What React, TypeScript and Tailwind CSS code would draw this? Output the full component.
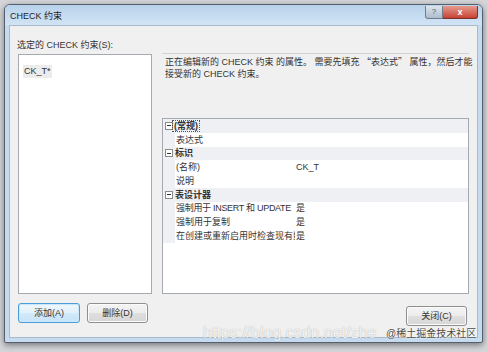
import { Fragment } from 'react';

type Row = { kind: 'cat' | 'prop'; label: string; value?: string; focus?: boolean; tight?: boolean };

const rows: Row[] = [
  { kind: 'cat', label: '(常规)', focus: true },
  { kind: 'prop', label: '表达式', value: '' },
  { kind: 'cat', label: '标识' },
  { kind: 'prop', label: '(名称)', value: 'CK_T' },
  { kind: 'prop', label: '说明', value: '' },
  { kind: 'cat', label: '表设计器' },
  { kind: 'prop', label: '强制用于 INSERT 和 UPDATE', value: '是', tight: true },
  { kind: 'prop', label: '强制用于复制', value: '是' },
  { kind: 'prop', label: '在创建或重新启用时检查现有数据', value: '是' },
];

function MinusBox() {
  return (
    <div className="w-[8px] h-[8px] border border-[#8a8a8a] bg-white flex items-center justify-center">
      <div className="w-[4px] h-px bg-[#333]" />
    </div>
  );
}

function WinButton({ label, primary, className = '' }: { label: string; primary?: boolean; className?: string }) {
  return (
    <button
      type="button"
      className={
        primary
          ? `h-[20px] rounded-[3px] border border-[#4a9dd6] bg-[linear-gradient(#eef7fd,#e3f1fb_50%,#d3eafa_50%,#c6e3f8)] shadow-[inset_0_0_0_1px_#c9e6fb] text-[9px] leading-[12px] text-[#333] ${className}`
          : `h-[20px] rounded-[3px] border border-[#8e8f8f] bg-[linear-gradient(#f4f4f4,#ececec_50%,#dfdfdf_50%,#d6d6d6)] shadow-[inset_0_0_0_1px_#fbfbfb] text-[9px] leading-[12px] text-[#333] ${className}`
      }
    >
      {label}
    </button>
  );
}

export default function App() {
  return (
    <div className="relative w-[487px] h-[352px] overflow-hidden bg-[#d3d5d8] pt-[4px] pl-[4px] font-['Liberation_Sans','Noto_Sans_CJK_SC',sans-serif] text-[#333]">
      {/* 对话框窗口 */}
      <div className="w-[479px] h-[339px] flex flex-col rounded-t-[6px] rounded-b-[2px] border border-[#55606c] bg-[#c6dbf0] shadow-[0_2px_6px_rgba(0,0,0,0.45)]">
        {/* 标题栏 */}
        <div className="h-[20px] flex items-start rounded-t-[5px] bg-gradient-to-b from-[#b8d2ec] to-[#d2e4f5]">
          <span className="ml-[5px] mt-[5px] text-[9px] leading-[12px] text-[#1e1e1e]">CHECK 约束</span>
          <div className="ml-auto mr-[4px] mt-[1px] flex">
            <div className="w-[18px] h-[13px] rounded-bl-[3px] border border-[#6d7d8f] border-t-0 bg-gradient-to-b from-[#dde4ec] to-[#aebccb] flex items-center justify-center text-[8px] leading-[10px] text-[#4c5866]">
              ?
            </div>
            <div className="w-[35px] h-[13px] rounded-br-[3px] border border-[#7e2f28] border-t-0 border-l-0 bg-gradient-to-b from-[#e59a8c] to-[#c63f33] flex items-center justify-center text-[9px] leading-[10px] font-bold text-white">
              x
            </div>
          </div>
        </div>

        {/* 客户区 */}
        <div className="ml-[4px] mr-[4px] h-[313px] border border-[#a7b9cc] bg-[#f0f0f0] flex">
          {/* 左侧：约束列表 */}
          <div className="ml-[8px] w-[134px] flex flex-col">
            <div className="mt-[13px] -ml-px h-[12px] text-[9px] leading-[12px] whitespace-nowrap">选定的 CHECK 约束(S):</div>
            <div className="mt-[3px] h-[240px] border border-[#a5a9b0] bg-white pl-[4px] pt-[2px]">
              <span className="inline-block px-[1px] bg-[#ececec] text-[9px] leading-[13px]">CK_T*</span>
            </div>
            <div className="mt-[9px] flex gap-[7px]">
              <WinButton label="添加(A)" primary className="w-[62px]" />
              <WinButton label="删除(D)" className="w-[61px]" />
            </div>
          </div>

          {/* 右侧：属性 */}
          <div className="ml-[10px] w-[307px] flex flex-col">
            <div className="mt-[27px] h-[65px] border-t border-[#d2d2d2] pl-[3px] pt-[2px] text-[9px] leading-[12px]">
              <div className="whitespace-nowrap">
                正在编辑新的 CHECK 约束 的属性。 需要先填充 <span className="font-['Noto_Sans_CJK_SC',sans-serif]">“</span>表达式<span className="font-['Noto_Sans_CJK_SC',sans-serif]">”</span> 属性，然后才能
              </div>
              <div className="whitespace-nowrap">接受新的 CHECK 约束。</div>
            </div>
            <div className="h-[176px] border border-[#a5a9b0] bg-white">
              {rows.map((r, i) => (
                <Fragment key={i}>
                  {r.kind === 'cat' ? (
                    <div className="h-[13.75px] flex items-center bg-[#eef0f3]">
                      <div className="w-[12px] flex justify-center">
                        <MinusBox />
                      </div>
                      <span
                        className={
                          r.focus
                            ? '-ml-[2px] px-[1px] outline outline-1 outline-dotted outline-[#555] font-bold text-[9px] leading-[10px]'
                            : 'font-bold text-[9px] leading-[10px]'
                        }
                      >
                        {r.label}
                      </span>
                    </div>
                  ) : (
                    <div className="h-[13.75px] flex items-center">
                      <div className="w-[12px] h-full bg-[#eef0f3]" />
                      <div
                        className={
                          r.tight
                            ? 'w-[120px] pl-[1px] overflow-hidden whitespace-nowrap tracking-[-0.3px] text-[9px] leading-[12px]'
                            : 'w-[120px] pl-[1px] overflow-hidden whitespace-nowrap text-[9px] leading-[12px]'
                        }
                      >
                        {r.label}
                      </div>
                      <div className="pl-[1px] text-[9px] leading-[12px]">{r.value}</div>
                    </div>
                  )}
                </Fragment>
              ))}
            </div>
            <div className="mt-[12px] flex justify-end mr-[2px]">
              <WinButton label="关闭(C)" className="w-[61px]" />
            </div>
          </div>
        </div>
      </div>

      {/* 水印 */}
      <div className="absolute left-[203px] top-[324px] text-[16px] leading-[18px] text-white/85 whitespace-nowrap [text-shadow:0_0_1px_rgba(0,0,0,0.35)]">
        https://blog.csdn.net/zhe
      </div>
      <div className="absolute left-[386px] top-[328px] text-[10px] leading-[12px] text-[#4a4a4a] whitespace-nowrap [text-shadow:0_0_2px_#fff,0_0_1px_#fff]">
        @稀土掘金技术社区
      </div>
    </div>
  );
}
